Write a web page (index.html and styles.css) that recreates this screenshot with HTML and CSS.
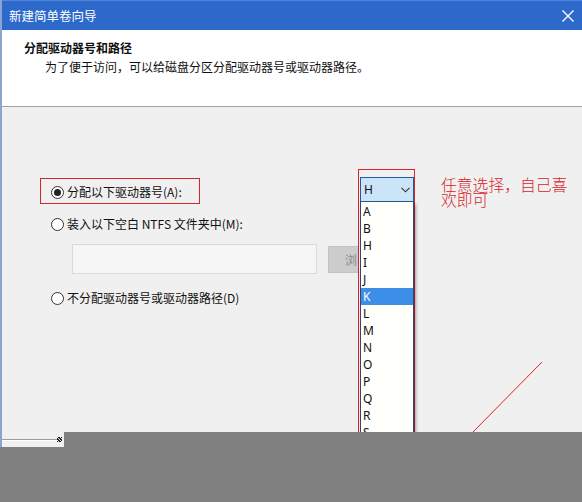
FILE: index.html
```html
<!DOCTYPE html>
<html lang="zh-CN">
<head>
<meta charset="utf-8">
<title>新建简单卷向导</title>
<link rel="stylesheet" href="styles.css">
</head>
<body>
<div class="window">
  <div class="titlebar">
    <span class="title">新建简单卷向导</span>
    <svg class="close" width="12" height="12" viewBox="0 0 12 12"><path d="M0.5 0.5 L11.5 11.5 M11.5 0.5 L0.5 11.5" stroke="#fff" stroke-width="1.4" fill="none"/></svg>
  </div>
  <div class="header">
    <div class="heading">分配驱动器号和路径</div>
    <div class="subtitle">为了便于访问，可以给磁盘分区分配驱动器号或驱动器路径。</div>
  </div>
  <div class="content">
    <div class="options">
      <div class="option"><span class="radio checked"></span><span>分配以下驱动器号(A):</span></div>
      <div class="option"><span class="radio"></span><span>装入以下空白 NTFS 文件夹中(M):</span></div>
      <div class="pathrow">
        <div class="pathbox"></div>
        <div class="browse">浏</div>
      </div>
      <div class="option"><span class="radio"></span><span>不分配驱动器号或驱动器路径(D)</span></div>
    </div>
    <div class="bottomline"><span class="grip"></span></div>
  </div>
</div>

<div class="mark mark-radio"></div>
<div class="mark mark-combo"></div>

<div class="dropdown">
  <div class="combo"><span>H</span><svg width="9" height="6" viewBox="0 0 9 6"><path d="M0.5 0.8 L4.5 4.8 L8.5 0.8" stroke="#333" stroke-width="1.1" fill="none"/></svg></div>
  <div class="list">
    <div class="item">A</div>
    <div class="item">B</div>
    <div class="item">H</div>
    <div class="item">I</div>
    <div class="item">J</div>
    <div class="item selected">K</div>
    <div class="item">L</div>
    <div class="item">M</div>
    <div class="item">N</div>
    <div class="item">O</div>
    <div class="item">P</div>
    <div class="item">Q</div>
    <div class="item">R</div>
    <div class="item">S</div>
    <div class="item">T</div>
  </div>
</div>

<div class="note">任意选择，自己喜欢即可</div>

<svg class="arrow" width="582" height="502" viewBox="0 0 582 502"><line x1="542" y1="362" x2="472" y2="433" stroke="#d8232a" stroke-width="1"/></svg>

<div class="cover cover-right"></div>
<div class="cover cover-bottom"></div>
</body>
</html>
```

FILE: styles.css
```css
html, body {
  margin: 0;
  padding: 0;
}
body {
  width: 582px;
  height: 502px;
  overflow: hidden;
  position: relative;
  background: #f0f0f0;
  font-family: "Noto Sans CJK SC", "Microsoft YaHei", sans-serif;
  font-size: 12px;
  color: #111;
}
.window {
  height: 502px;
  border-left: 2px solid #8aa5d4;
  display: flex;
  flex-direction: column;
  box-sizing: border-box;
}
.titlebar {
  height: 30px;
  flex: none;
  background: #2c69cb;
  border-top: 1px solid #4f86dc;
  box-sizing: border-box;
  color: #fff;
  display: flex;
  align-items: center;
  justify-content: space-between;
  padding: 0 8px 0 7px;
  font-size: 12.5px;
}
.title {
  line-height: 16px;
}
.close {
  display: block;
}
.header {
  height: 77px;
  flex: none;
  box-sizing: border-box;
  background: #fff;
  border-bottom: 1px solid #a3a3a3;
  padding: 10px 0 0 22px;
}
.heading {
  font-weight: bold;
  line-height: 16px;
}
.subtitle {
  margin-top: 3px;
  padding-left: 21px;
  line-height: 16px;
}
.content {
  flex: 1;
  background: #f0f0f0;
  display: flex;
  flex-direction: column;
}
.options {
  padding: 75px 0 0 49px;
  display: flex;
  flex-direction: column;
}
.option {
  height: 20px;
  display: flex;
  align-items: center;
  gap: 3px;
  line-height: 20px;
}
.option + .option {
  margin-top: 12px;
}
.radio {
  width: 13px;
  height: 13px;
  box-sizing: border-box;
  border: 1px solid #333;
  border-radius: 50%;
  background: #fff;
  position: relative;
  flex: none;
}
.radio.checked::after {
  content: "";
  position: absolute;
  left: 2px;
  top: 2px;
  width: 7px;
  height: 7px;
  border-radius: 50%;
  background: #222;
}
.pathrow {
  display: flex;
  align-items: center;
  gap: 11px;
  margin: 10px 0 14px 21px;
}
.pathrow + .option {
  margin-top: 0;
}
.pathbox {
  width: 245px;
  height: 30px;
  box-sizing: border-box;
  border: 1px solid #d9d9d9;
  background: #f6f6f6;
}
.browse {
  width: 31px;
  height: 27px;
  box-sizing: border-box;
  background: #cccccc;
  border: 1px solid #c4c4c4;
  border-right: none;
  color: #8a8a8a;
  line-height: 25px;
  padding-left: 16px;
  white-space: nowrap;
  overflow: hidden;
}
.bottomline {
  margin-top: 131px;
  width: 55px;
  height: 1px;
  background: #9c9c9c;
  border-bottom: 1px solid #ffffff;
  position: relative;
}
.grip {
  position: absolute;
  left: 55px;
  top: -2px;
  width: 5px;
  height: 5px;
  background: repeating-linear-gradient(45deg, #222 0 1px, #e0e0e0 1px 2px);
}
.mark {
  position: absolute;
  border: 1px solid #d6262c;
  box-sizing: border-box;
}
.mark-radio {
  left: 40px;
  top: 178px;
  width: 160px;
  height: 26px;
}
.mark-combo {
  left: 358px;
  top: 169px;
  width: 57px;
  height: 300px;
}
.dropdown {
  position: absolute;
  left: 360px;
  top: 177px;
  width: 54px;
}
.combo {
  height: 25px;
  box-sizing: border-box;
  background: #cce4f7;
  border: 1px solid #1f5c99;
  display: flex;
  align-items: center;
  justify-content: space-between;
  padding: 0 3px 0 3px;
  font-family: "Noto Sans", "Liberation Sans", sans-serif;
  font-size: 12px;
  color: #111;
}
.list {
  background: #fffffb;
  border: 1px solid #3b3f7a;
  border-top: none;
  box-shadow: 2px 2px 3px rgba(0, 0, 0, 0.35);
  padding-top: 1px;
}
.item {
  height: 17px;
  line-height: 17px;
  padding-left: 2px;
  font-family: "Noto Sans", "Liberation Sans", sans-serif;
  font-size: 12px;
  color: #111;
}
.item.selected {
  background: #3c8ee6;
  color: #fff;
}
.note {
  position: absolute;
  left: 441px;
  top: 177px;
  width: 132px;
  font-size: 15.8px;
  font-weight: 300;
  line-height: 15px;
  color: #d8232a;
}
.arrow {
  position: absolute;
  left: 0;
  top: 0;
}
.cover {
  position: absolute;
  background: #808080;
}
.cover-right {
  left: 64px;
  top: 432px;
  right: 0;
  bottom: 0;
}
.cover-bottom {
  left: 0;
  top: 447px;
  right: 0;
  bottom: 0;
}
```
